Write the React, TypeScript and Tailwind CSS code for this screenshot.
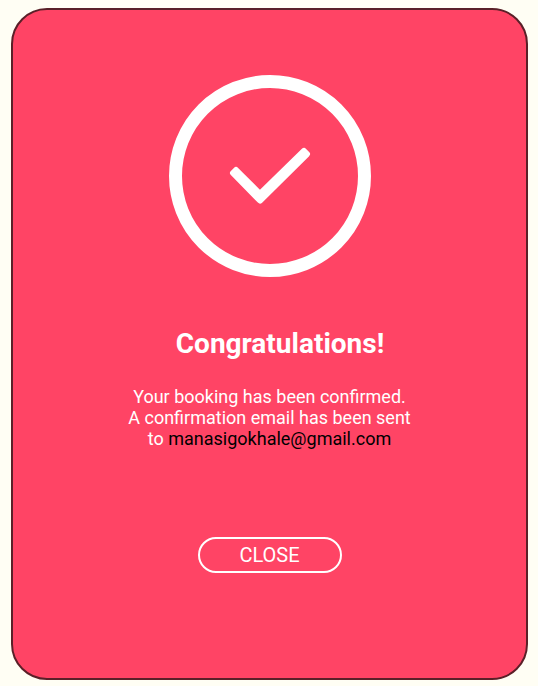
export default function App() {
  return (
    <main className="h-screen bg-[#fffef4] pt-2 pr-[10px] pb-[6px] pl-[11px] font-['Roboto',sans-serif]">
      <section
        aria-labelledby="confirmation-title"
        className="flex h-full flex-col items-center rounded-[36px] border-2 border-[#5a2028] bg-[#ff4465] pt-[65px] text-center text-white"
      >
        <svg viewBox="0 0 202 202" className="w-[202px] shrink-0" stroke="currentColor" aria-hidden="true">
          <circle cx="101" cy="101" r="94.5" fill="none" strokeWidth="13" />
          <path
            d="M64 98 67 95 91 119 135 76 138 79 91 125.5Z"
            fill="currentColor"
            strokeWidth="6"
            strokeLinejoin="round"
          />
        </svg>
        <h1 id="confirmation-title" className="mt-[49px] pl-[21px] text-[28px] leading-9 font-bold">
          Congratulations!
        </h1>
        <p className="mt-6 text-[18px] leading-[21px]">
          Your booking has been confirmed.
          <br />
          A confirmation email has been sent
          <br />
          to <span className="text-black">manasigokhale@gmail.com</span>
        </p>
        <button type="button" className="mt-[88px] h-9 w-36 rounded-full border-2 border-white text-[20px]">
          CLOSE
        </button>
      </section>
    </main>
  );
}
